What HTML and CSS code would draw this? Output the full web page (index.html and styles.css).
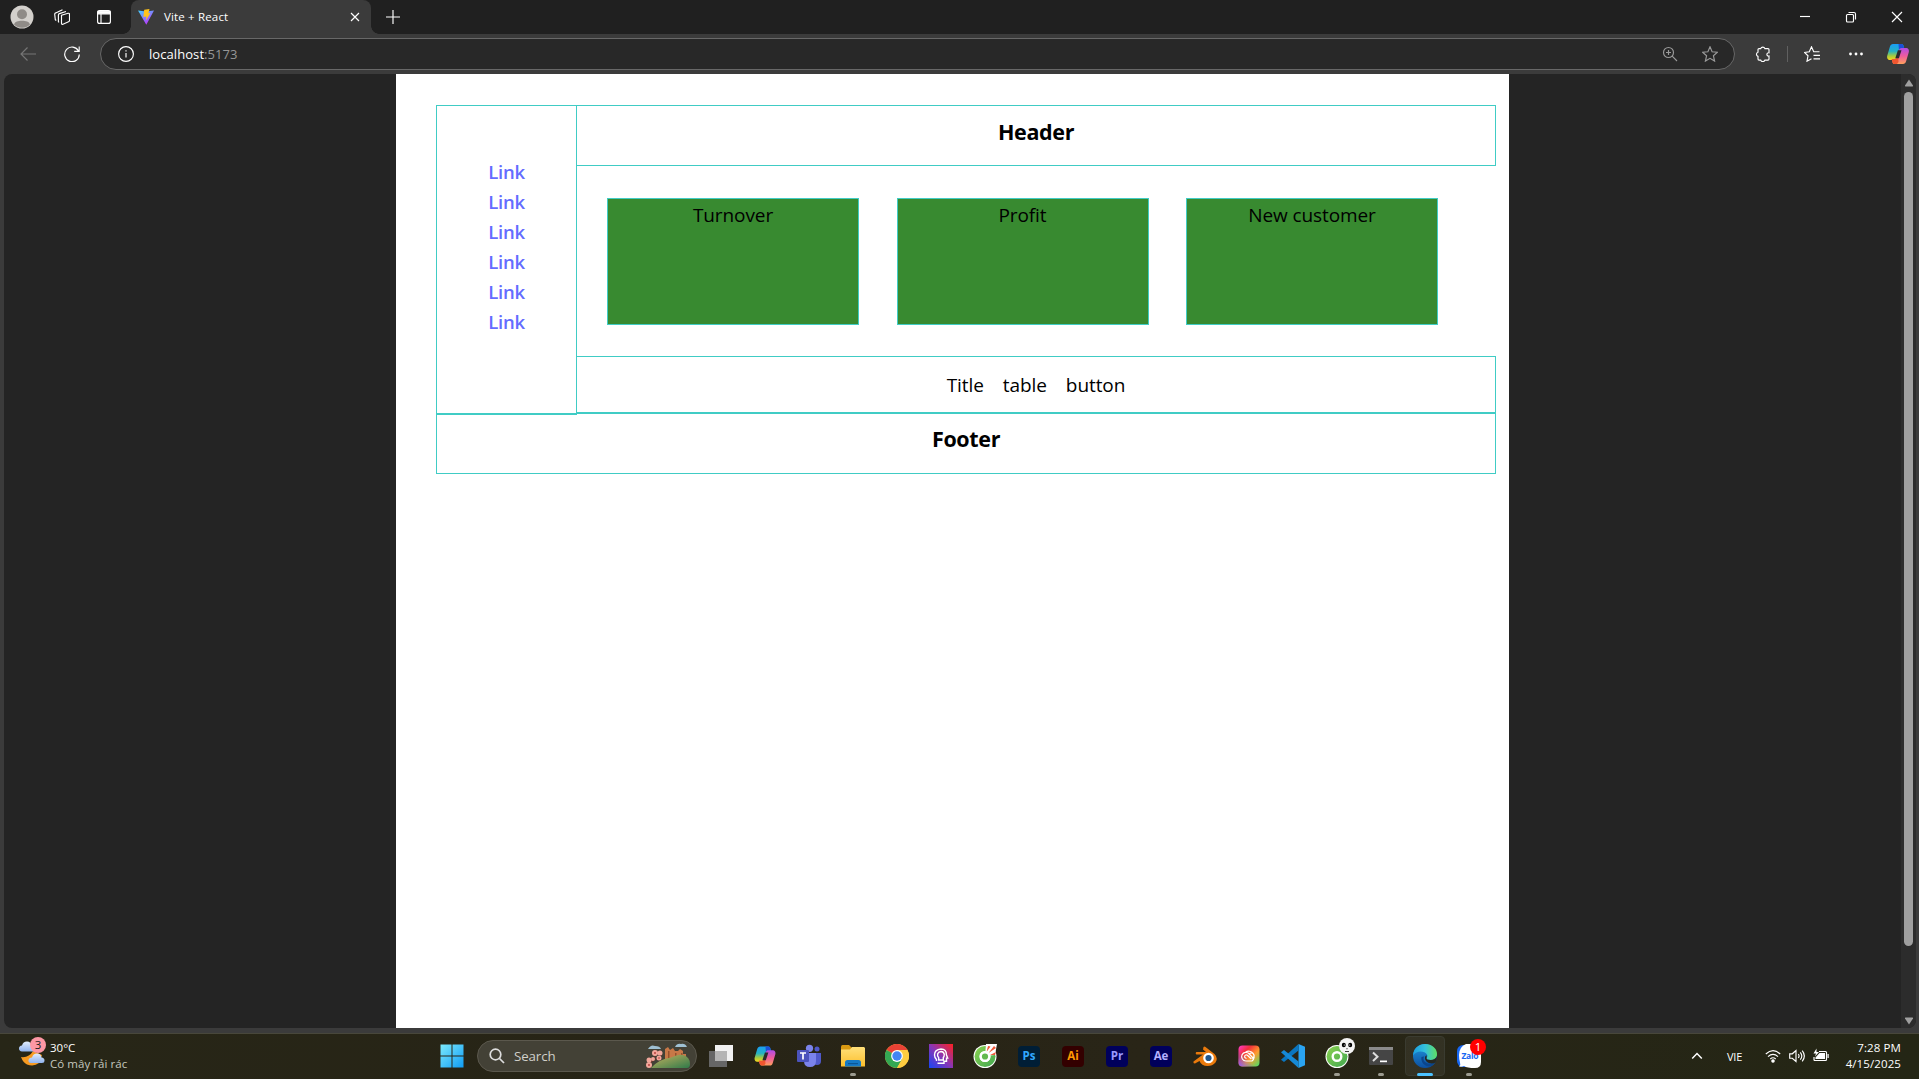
FILE: index.html
```html
<!DOCTYPE html>
<html lang="en">
<head>
<meta charset="utf-8">
<title>Vite + React</title>
<link rel="stylesheet" href="styles.css">
</head>
<body>
<svg width="0" height="0" class="defs" aria-hidden="true">
  <defs>
    <linearGradient id="cpA" x1="0" y1="0" x2="0" y2="1"><stop offset="0" stop-color="#1a9df5"/><stop offset=".45" stop-color="#25b2c4"/><stop offset=".75" stop-color="#a8cc3c"/><stop offset="1" stop-color="#f8d51d"/></linearGradient>
    <linearGradient id="cpB" x1="0" y1="0" x2="0" y2="1"><stop offset="0" stop-color="#b04ce8"/><stop offset=".5" stop-color="#ee5b9c"/><stop offset="1" stop-color="#ffa05c"/></linearGradient>
    <linearGradient id="winG" x1="0" y1="0" x2="1" y2="1"><stop offset="0" stop-color="#7ce9fc"/><stop offset="1" stop-color="#109cf5"/></linearGradient>
    <linearGradient id="viteA" x1="0" y1="0" x2=".6" y2="1"><stop offset="0" stop-color="#41d1ff"/><stop offset="1" stop-color="#bd34fe"/></linearGradient>
    <linearGradient id="folder" x1="0" y1="0" x2="0" y2="1"><stop offset="0" stop-color="#ffe07a"/><stop offset="1" stop-color="#fcbf2c"/></linearGradient>
    <linearGradient id="idG" x1="0" y1="1" x2="1" y2="0"><stop offset="0" stop-color="#1746f5"/><stop offset=".5" stop-color="#8a35b5"/><stop offset="1" stop-color="#ff2020"/></linearGradient>
    <linearGradient id="ccG" x1="0" y1="0" x2="1" y2="1"><stop offset="0" stop-color="#ff3bd0"/><stop offset=".3" stop-color="#f22f3c"/><stop offset=".6" stop-color="#ff9b2d"/><stop offset="1" stop-color="#3fe06b"/></linearGradient>
    <linearGradient id="ccB" x1="1" y1="0" x2="0" y2="1"><stop offset=".6" stop-color="#4b6bff" stop-opacity="0"/><stop offset="1" stop-color="#9a55ff"/></linearGradient>
    <linearGradient id="edgeA" x1="0" y1="0" x2="1" y2="0"><stop offset="0" stop-color="#1b9de0"/><stop offset=".5" stop-color="#34c1dd"/><stop offset="1" stop-color="#5fe062"/></linearGradient>
    <linearGradient id="edgeB" x1="0" y1="0" x2="0" y2="1"><stop offset="0" stop-color="#2196dd"/><stop offset="1" stop-color="#0c4fa0"/></linearGradient>
    <linearGradient id="greenG" x1="0" y1="0" x2="1" y2="1"><stop offset="0" stop-color="#8bd24f"/><stop offset="1" stop-color="#43a852"/></linearGradient>
    <linearGradient id="hill" x1="0" y1="0" x2="1" y2="1"><stop offset="0" stop-color="#c9b35f"/><stop offset="1" stop-color="#2f7a4a"/></linearGradient>
    <linearGradient id="cloud" x1="0" y1="0" x2="0" y2="1"><stop offset="0" stop-color="#e2edfc"/><stop offset="1" stop-color="#90b3ee"/></linearGradient>
    <symbol id="copilot" viewBox="0 0 24 24">
      <path d="M7 2h8.500c1.200 0 1.700.8 2 1.800l.9 3.200h-3.200c-1.300 0-1.900.8-2.200 1.900L11 16c-.5 1.300-1.200 2-2.600 2H3.800C1.300 18 .7 15.500 1.300 13.500l2.600-8.700C4.500 3 5.400 2 7 2z" fill="url(#cpA)"/>
      <path d="M12.500 2h3c1.200 0 1.700.8 2 1.800l.9 3.200h-3.200c-1.300 0-1.900.8-2.200 1.900z" fill="#1b50d8"/>
      <path d="M17 22H8.500c-1.200 0-1.700-.8-2-1.800L5.700 17h3c1.300 0 1.900-.8 2.200-1.900L13 8c.5-1.300 1.200-2 2.600-2h4.600c2.500 0 3.100 2.500 2.500 4.500l-2.600 8.700C19.500 21 18.600 22 17 22z" fill="url(#cpB)"/>
      <path d="M5.700 17h3c1.300 0 1.900-.8 2.200-1.900L12 11.500 12.500 20 11 22H8.500c-1.200 0-1.700-.8-2-1.800z" fill="#f0562f"/>
      <path d="M11.900 8.300h3.600l-2.600 8H9.300z" fill="#2b2a2c"/>
    </symbol>
    <symbol id="coccoc" viewBox="0 0 24 24">
      <circle cx="12" cy="12.500" r="11.500" fill="#fff"/>
      <circle cx="12" cy="12.500" r="10.500" fill="url(#greenG)"/>
      <circle cx="12" cy="12.500" r="4.300" fill="none" stroke="#fff" stroke-width="2.400"/>
    </symbol>
  </defs>
</svg>

<div class="titlebar">
  <svg class="avatar" viewBox="0 0 24 24"><circle cx="12" cy="12" r="11.500" fill="#d3d0cc"/><circle cx="12" cy="9.200" r="5" fill="#8f8b87"/><path d="M4 19.500C5 16.500 8 15.800 12 15.800s7 .7 8 3.700A11.500 11.500 0 0 1 4 19.500z" fill="#8f8b87"/></svg>
  <svg class="ico workspaces" viewBox="0 0 16 16"><path d="M7.500 6.300 14 4.300q1.500-.3 1.500 1v6.200q0 1-1 1.300L9 15.300q-1.500.3-1.500-1zM5 13.300l-.6-.6V6q0-1 1-1.400L12 2.500M2.300 11.500l-1-.8-.6-5.400q0-1 1-1.400L8.500.8"/></svg>
  <svg class="ico tabmenu" viewBox="0 0 16 16"><rect x="1.600" y="1.600" width="12.800" height="12.800" rx="2"/><path d="M5 5v9"/><path d="M2 2.200h12v2.600H2z" fill="#fff"/></svg>
  <div class="tab">
    <svg class="vite" viewBox="0 0 16 16"><path d="M0 1.500 8 2.600l8-1.100L8.300 15.700z" fill="url(#viteA)"/><path d="M6.200.8 11.500 0 10.400 4.300l2-.3L8 11.500l.4-4-3 .6z" fill="#ffc31a"/></svg>
    <span class="tab-title">Vite + React</span>
    <svg class="ico tab-close" viewBox="0 0 10 10"><path d="M1 1l8 8M9 1 1 9"/></svg>
  </div>
  <svg class="ico plus" viewBox="0 0 16 16"><path d="M8 1v14M1 8h14"/></svg>
  <div class="window-buttons">
    <svg class="ico" viewBox="0 0 16 16"><path d="M3 7.500h10"/></svg>
    <svg class="ico" viewBox="0 0 16 16"><rect x="3.500" y="5.500" width="7" height="7.500" rx="1"/><path d="M5.500 3.500H11q1.500 0 1.500 1.500v5.500"/></svg>
    <svg class="ico" viewBox="0 0 16 16"><path d="M3 3l10 10M13 3 3 13"/></svg>
  </div>
</div>

<div class="toolbar">
  <svg class="ico back" viewBox="0 0 16 16"><path d="M16 8H1M7.500 1.500 1 8l6.500 6.500"/></svg>
  <svg class="ico reload" viewBox="0 0 16 16"><path d="M14.500 5A7.300 7.300 0 1 0 15.300 8.500M15.200.5v4.800h-5"/></svg>
  <div class="address">
    <svg class="ico" viewBox="0 0 16 16"><circle cx="8" cy="8" r="7.400"/><path d="M8 7v4.500M8 4.300v1.300"/></svg>
    <span class="url">localhost<span class="port">:5173</span></span>
    <svg class="ico zoom" viewBox="0 0 16 16"><circle cx="6.500" cy="6.500" r="5"/><path d="M10.200 10.200 15 15M6.500 4v5M4 6.500h5"/></svg>
    <svg class="ico star" viewBox="0 0 16 16"><path d="m8 .8 2.100 4.900 5.300.5-4 3.500 1.200 5.400L8 12.300l-4.600 2.800 1.200-5.400-4-3.500 5.300-.5z"/></svg>
  </div>
  <svg class="ico puzzle" viewBox="0 0 16 16"><path d="M5.700 2.600a2.200 2.200 0 0 1 4.200 0H13q1 0 1 1v3.200a1.700 1.700 0 1 0 0 3.300v3q0 1-1 1H9.900a2.200 2.200 0 0 1-4.200 0H4q-1 0-1-1v-2.700a2.200 2.200 0 0 1 0-4.200V3.600q0-1 1-1z"/></svg>
  <span class="divider"></span>
  <svg class="ico favs" viewBox="0 0 16 16"><path d="M15.500 5.700H9.700L7.500.8 5.300 5.700.5 6.500l3.500 3.300-1 5.400 4.500-2.500M9.500 9.300h6.500M9.500 12.800h6.500"/></svg>
  <svg class="dots" viewBox="0 0 16 4"><circle cx="2.500" cy="2" r="1.400"/><circle cx="8" cy="2" r="1.400"/><circle cx="13.500" cy="2" r="1.400"/></svg>
  <svg class="copilot-btn"><use href="#copilot"/></svg>
</div>

<div class="viewport">
  <main class="page">
    <div class="upper">
      <nav class="sidebar">
        <a>Link</a><a>Link</a><a>Link</a><a>Link</a><a>Link</a><a>Link</a>
      </nav>
      <div class="content">
        <header class="box heading">Header</header>
        <section class="cards">
          <div class="card">Turnover</div>
          <div class="card">Profit</div>
          <div class="card">New customer</div>
        </section>
        <section class="box row"><span>Title</span><span>table</span><span>button</span></section>
      </div>
    </div>
    <footer class="box heading footer">Footer</footer>
  </main>
  <div class="scrollbar">
    <svg viewBox="0 0 10 8"><path d="M5 .5 9 6.500q.3 1-.6 1H1.600q-.9 0-.6-1z"/></svg>
    <span class="thumb"></span>
    <svg viewBox="0 0 10 8"><path d="M5 7.500 9 1.500q.3-1-.6-1H1.600q-.9 0-.6 1z"/></svg>
  </div>
</div>

<div class="taskbar">
  <div class="weather">
    <svg viewBox="0 0 28 30"><path d="M14 14l9 4-3 8q-5 4-12 1.500-4-2-6-7.500 8 1 12-6z" fill="#f79a20"/><path d="M3 14.500q-3-.3-3-3t3-3q1-4 5-4t5 5l2 5z" fill="url(#cloud)"/><path d="M12 26q-3-.5-2.500-3t3.500-2.500q1-4 5-4t4.500 4q3 .3 3 3t-3 2.500z" fill="url(#cloud)"/><circle cx="19" cy="8" r="8" fill="#fd97a5"/><text x="19" y="12.300" text-anchor="middle" class="badge-text">3</text></svg>
    <div class="weather-text"><span>30°C</span><span class="muted">Có mây rải rác</span></div>
  </div>
  <div class="apps">
    <div class="app"><svg viewBox="0 0 24 24"><path d="M.5 .5h11v11H.5zm12 0h11v11h-11zm-12 12h11v11H.5zm12 0h11v11h-11z" fill="url(#winG)"/></svg></div>
    <div class="search">
      <svg class="lens" viewBox="0 0 16 16"><circle cx="6.500" cy="6.500" r="5.300"/><path d="M10.500 10.500 15 15"/></svg>
      <span>Search</span>
      <svg class="scene" viewBox="0 0 46 26"><path d="M20 20V6l3-2 2 3 3-2 2 3h3l2-2 3 2v3h3v9z" fill="#c87847"/><path d="M23 8h1.500v9H23zm7 2h1.500v7H30zm6 0h1.500v6H36z" fill="#95512d"/><path d="M6 25Q14 16 26 14.500 33 11 38 12q7 2 7 9 0 4-3 4z" fill="url(#hill)"/><path d="M3 6q3-5 7-3 5 0 6 3zM30 4q2-4 6-3 4-1 6 3z" fill="#9fc0d3"/><path d="M3 24 13 8M5 20l12-8" stroke="#6a332b" fill="none"/><g fill="#f3a79b"><circle cx="10" cy="10" r="3"/><circle cx="15" cy="10" r="2.500"/><circle cx="4" cy="17" r="2.500"/><circle cx="8" cy="16" r="2"/><circle cx="4" cy="22" r="3"/><circle cx="14" cy="15" r="2.500"/></g><g fill="#b03a35"><circle cx="10" cy="10" r=".9"/><circle cx="4" cy="22" r=".9"/><circle cx="14" cy="15" r=".8"/></g></svg>
    </div>
    <div class="app"><svg viewBox="0 0 24 24"><path d="M6 1h18v16H6z" fill="#f1f1f1"/><path d="M0 7h18v16H0z" fill="#666"/><path d="M6 7h12v10H6z" fill="#b4b4b4"/></svg></div>
    <div class="app"><svg viewBox="-.5 0 25 24"><use href="#copilot" width="24" height="24"/></svg></div>
    <div class="app"><svg viewBox="0 0 24 24"><circle cx="12.500" cy="4.300" r="3.600" fill="#7b83eb"/><circle cx="20" cy="5" r="2.500" fill="#5059c9"/><path d="M16 9h8v8q0 4-4 4-4 0-4-4z" fill="#5059c9"/><path d="M7 9h12v8q0 6-6 6t-6-6z" fill="#7b83eb"/><rect y="6" width="12" height="12" rx="1" fill="#4b53bc"/><path d="M3 9h6M6 9v6.500" stroke="#fff" stroke-width="1.700"/></svg></div>
    <div class="app running"><svg viewBox="0 0 24 24"><path d="M0 3q0-2 1.500-2H8l2.500 2.500V8H0z" fill="#d99a12"/><path d="M0 5.500h9l2-2.500h12l1 1v18.500H0z" fill="url(#folder)"/><path d="M4 22.500v-4q0-2.500 2.500-2.500h11q2.500 0 2.500 2.500v4z" fill="#1579c5"/><path d="M7 19h10v1.200H7z" fill="#0b5796"/></svg></div>
    <div class="app"><svg viewBox="0 0 24 24"><circle cx="12" cy="12" r="12" fill="#ffcd40"/><path d="M12 12 1.600 6A12 12 0 0 1 22.400 6z" fill="#e94235"/><path d="M1.600 6A12 12 0 0 0 12 24l5.200-9z" fill="#34a853"/><path d="M22.400 6H12v6l5.200 3L12 24A12 12 0 0 0 22.400 6z" fill="#ffcd40"/><circle cx="12" cy="12" r="5.900" fill="#fff"/><circle cx="12" cy="12" r="4.700" fill="#4285f4"/></svg></div>
    <div class="app"><svg viewBox="0 0 24 24"><path d="M0 0h24v24H0z" fill="url(#idG)"/><path d="M8.500 19.300H15v-2h2.500v-3.200h1.200l-1.300-3.300Q17.500 5 12 5 5.500 5.500 5.500 11q0 2.500 2 4.500v1.500M9.700 16v-2.300Q8 12 8.700 9.700 9.700 7.500 12 7.500q3 .2 3.300 3 0 2-1 3V16z" fill="none" stroke="#fff" stroke-width="1.400"/></svg></div>
    <div class="app"><svg viewBox="0 0 24 24"><use href="#coccoc" width="24" height="24"/><path d="M12 12 13 0h11l-2 11z" fill="#fff"/><path d="M13.500 8 15 2l2.500.5zM15.500 9 21 2l2 2zM17 11l6-3-1 3z" fill="#f0583a"/><circle cx="12" cy="12.500" r="4.300" fill="#64b94e" stroke="#fff" stroke-width="2.400"/></svg></div>
    <div class="app"><span class="adobe ps">Ps</span></div>
    <div class="app"><span class="adobe ai">Ai</span></div>
    <div class="app"><span class="adobe pr">Pr</span></div>
    <div class="app"><span class="adobe ae">Ae</span></div>
    <div class="app"><svg viewBox="0 0 24 24"><path d="M10.500 3q1-.8 2 0l9 7q4 4 1 8.500-3 3.500-8 3.500-6 0-8-5l-4.500 2.500q-2 0-1.500-2L10 10.500H3.500q-1.500-1-.2-2.500H13l-3-2.500z" fill="#ea7a0c"/><circle cx="15.500" cy="14" r="5.300" fill="#fff"/><circle cx="15.500" cy="14" r="3.100" fill="#20568c"/></svg></div>
    <div class="app"><svg viewBox="0 0 24 24"><rect x="1.500" y="1.500" width="21" height="21" rx="4" fill="url(#ccG)"/><rect x="1.500" y="1.500" width="21" height="21" rx="4" fill="url(#ccB)"/><path d="M15 17H9a4.300 4.300 0 1 1 3.300-7l3.200 3.500M9.500 14.300a1.700 1.700 0 1 1 .9-3l4 3.700M8.500 8.300A5 5 0 1 1 15 17M12.300 10a2.700 2.700 0 1 1 2.700 4.300" fill="none" stroke="#fff" stroke-width="1.200"/></svg></div>
    <div class="app"><svg viewBox="0 0 24 24"><path d="M17.500 0 24 2.800v18.400L17.500 24z" fill="#2aa4f2"/><path d="M17.500 0v6.500L3 18l-3-2.300z" fill="#0a76c0"/><path d="M17.500 24v-6.500L3 6 0 8.300z" fill="#1689d6"/></svg></div>
    <div class="app running"><svg viewBox="0 0 24 24"><use href="#coccoc" width="24" height="24"/></svg><svg class="panda" viewBox="0 0 16 16"><circle cx="8" cy="8" r="8" fill="#f4f4f4"/><ellipse cx="4.800" cy="7" rx="2" ry="2.300"/><ellipse cx="11.200" cy="7" rx="2" ry="2.300"/><path d="M7 10.500h2l-1 1zM6 13h4v.7H6z"/><circle cx="5.300" cy="7" r=".6" fill="#fff"/><circle cx="10.700" cy="7" r=".6" fill="#fff"/></svg></div>
    <div class="app running"><svg viewBox="0 0 24 24"><rect y="3" width="24" height="18" rx="1" fill="#454545"/><path d="M0 3h24v3H0z" fill="#8b8b8b"/><path d="m4 8.500 4.500 4.300L4 17" fill="none" stroke="#ddd" stroke-width="2"/><path d="M11 16.500h7v1.700h-7z" fill="#fff"/></svg></div>
    <div class="app active"><svg viewBox="0 0 24 24"><circle cx="12" cy="12" r="12" fill="url(#edgeB)"/><path d="M0 11.500C.5 4 6 0 12 0c7 0 12 4.500 12 10 0 4-3 6-6.500 6-3 0-4.500-1-4-2 .8-1 1.200-2 .5-3.500C12 7 4 5.500 0 11.500z" fill="url(#edgeA)"/><path d="M8.500 13c-1 5 3 9.500 8 9.500q3 0 6-4.500-3 2-7 1.500c-4-.5-6-4-4.500-7z" fill="#0b458c"/><path d="M13.600 14c-.5 1 1 2 4 2 3 0 5.500-1.200 6.400-4l-.3 3.500-1.200 3c-5 2.500-11-.5-10.500-5 .2-1.500 1-2 1.700-2z" fill="#272820"/></svg></div>
    <div class="app running"><svg viewBox="0 0 24 24"><rect x="0" y="1" width="22" height="22" rx="6" fill="#1767f2"/><path d="M9 0h9q6 0 6 6v12q0 6-6 6-8 0-11-2-2 1-5 .5 2-1.500 1-4Q2 15 2 11 2 3 9 0z" fill="#fff"/><text x="4.500" y="14.500" class="zalo-text" textLength="17">Zalo</text></svg><span class="count">1</span></div>
  </div>
  <div class="tray">
    <svg class="ico chevron" viewBox="0 0 12 8"><path d="m1.200 6.500 4.800-5 4.800 5"/></svg>
    <span class="lang">VIE</span>
    <svg class="ico" viewBox="0 0 16 16"><path d="M.8 6q7.200-6.700 14.400 0M3 8.700q5-4.600 10 0M5.300 11q2.700-2.500 5.400 0"/><circle cx="8" cy="13" r="1.200" fill="#fff"/></svg>
    <svg class="ico" viewBox="0 0 16 16"><path d="M.7 5.800h2.600L7 2.500v11l-3.700-3.300H.7zM9.300 6q1.500 2 0 4M11.300 4.300q3 3.700 0 7.400M13.200 2.700q4.300 5.300 0 10.600"/></svg>
    <svg class="ico" viewBox="0 0 16 16"><path d="M6 3.500h6.500q1 0 1 1v7q0 1-1 1H2q-1 0-1-1V9"/><path d="M6.500 5H12v6H2.500V9.500zM3.500.5.5 5.500H3l-1 3 4-4.500H3.500zM14.500 6h1.200v4h-1.200z" fill="#fff" stroke="none"/></svg>
    <div class="clock"><span>7:28 PM</span><span>4/15/2025</span></div>
  </div>
</div>
</body>
</html>
```
FILE: styles.css
```css
* { box-sizing: border-box; }
html, body { height: 100%; }
body {
  margin: 0;
  overflow: hidden;
  display: flex;
  flex-direction: column;
  background: #3b3b3b;
  color: #fff;
  font: 11.5px/16px "Open Sans", "Noto Sans", sans-serif;
}
svg { display: block; flex: none; }
.defs { position: absolute; }
.ico { width: 16px; height: 16px; fill: none; stroke: #fff; stroke-width: 1.15; }

.titlebar {
  flex: none;
  height: 34px;
  display: flex;
  align-items: center;
  background: #202020;
  padding-left: 10px;
}
.avatar { width: 24px; height: 24px; }
.workspaces { margin-left: 20px; }
.tabmenu { margin-left: 26px; }
.tab {
  position: relative;
  width: 240px;
  height: 34px;
  margin-left: 19px;
  padding: 0 11px 0 7px;
  display: flex;
  align-items: center;
  background: #3b3b3b;
  border-radius: 8px 8px 0 0;
}
.tab::before, .tab::after {
  content: "";
  position: absolute;
  bottom: 0;
  width: 8px;
  height: 8px;
}
.tab::before { left: -8px; background: radial-gradient(circle at 0 0, transparent 7.5px, #3b3b3b 8px); }
.tab::after { right: -8px; background: radial-gradient(circle at 100% 0, transparent 7.5px, #3b3b3b 8px); }
.vite { width: 16px; height: 16px; }
.tab-title { margin-left: 10px; letter-spacing: .16px; }
.tab-close { width: 10px; height: 10px; margin-left: auto; }
.plus { margin-left: 14px; }
.window-buttons { display: flex; gap: 30px; margin: 0 14px 0 auto; }

.toolbar {
  flex: none;
  height: 40px;
  display: flex;
  align-items: center;
  padding-left: 20px;
}
.back { stroke: #767676; }
.reload { margin-left: 28px; }
.address {
  width: 1635px;
  height: 32px;
  margin-left: 20px;
  padding: 0 16px 0 17px;
  display: flex;
  align-items: center;
  background: #282828;
  border: 1px solid #686868;
  border-radius: 16px;
}
.url { margin: 0 auto 0 15px; font-size: 13px; letter-spacing: .07px; }
.port { color: #969696; }
.zoom, .star { stroke: #9a9a9a; }
.star { margin-left: 24px; }
.puzzle { margin-left: 20px; }
.divider { width: 1px; height: 16px; margin-left: 16px; background: #606060; }
.favs { margin-left: 16px; }
.dots { width: 16px; height: 4px; margin-left: 28px; fill: #fff; }
.copilot-btn { width: 24px; height: 24px; margin-left: 22px; }

.viewport {
  flex: none;
  height: 954px;
  margin: 0 3px 0 4px;
  display: flex;
  background: #242424;
  border-radius: 8px;
  overflow: hidden;
}
.page {
  width: 1113px;
  margin-left: 392px;
  padding: 31px 13px 0 40px;
  background: #fff;
  color: #000;
  font-size: 19px;
  line-height: 30px;
  text-align: center;
}
.upper { display: flex; height: 308px; }
.sidebar {
  width: 141px;
  height: 310px;
  flex: none;
  display: flex;
  flex-direction: column;
  padding-top: 51px;
  border: 1px solid #40ccc5;
  color: #646cff;
  font-size: 18.5px;
  font-weight: 600;
  letter-spacing: -.3px;
}
.content { flex: 1; display: flex; flex-direction: column; margin-left: -1px; }
.box { border: 1px solid #40ccc5; }
.heading { height: 61px; padding-top: 11px; font-size: 21.5px; font-weight: 700; letter-spacing: -.35px; }
.footer { padding-top: 10px; }
.cards { flex: 1; display: flex; gap: 37.5px; padding: 32px 0 0 31px; }
.card {
  width: 252px;
  height: 127px;
  padding-top: 1px;
  border: 1px solid #40ccc5;
  background: #388a30;
  letter-spacing: -.1px;
}
.row { height: 57px; display: flex; justify-content: center; gap: 19px; padding-top: 13px; letter-spacing: -.08px; }

.scrollbar {
  width: 15px;
  margin-left: auto;
  display: flex;
  flex-direction: column;
  align-items: center;
  background: #2c2c2c;
  padding: 5px 0 3px;
}
.scrollbar svg { width: 10px; height: 8px; fill: #9f9f9f; }
.thumb { width: 9px; height: 854px; margin: 5px 0 auto; border-radius: 5px; background: #9f9f9f; }

.taskbar {
  height: 46px;
  margin-top: 5px;
  display: flex;
  box-shadow: inset 0 1px #48473b;
  background: linear-gradient(90deg, #272617, #272416 35%, #292517 60%, #242615);
}
.weather { width: 430px; display: flex; padding-left: 19px; }
.weather > svg { width: 28px; height: 30px; margin-top: 4px; }
.weather-text { display: flex; flex-direction: column; margin: 7px 0 0 3px; }
.muted { color: #c5c6be; letter-spacing: .05px; }
.badge-text { font-size: 11.5px; fill: #222; }
.apps { display: flex; align-items: center; }
.app {
  position: relative;
  width: 44px;
  height: 44px;
  display: flex;
  align-items: center;
  justify-content: center;
}
.app > svg { width: 24px; height: 24px; }
.running::after, .active::after {
  content: "";
  position: absolute;
  bottom: 2px;
  left: 19px;
  width: 6px;
  height: 3px;
  border-radius: 2px;
  background: #9c9b90;
}
.active::before {
  content: "";
  position: absolute;
  inset: 2px;
  border: 1px solid #3a3b30;
  border-radius: 4px;
  background: rgba(255, 255, 255, .06);
}
.active::after { left: 14px; width: 16px; background: #4cc2ff; }
.active > svg { position: relative; }
.search {
  width: 220px;
  height: 32px;
  margin: 0 2px 0 3px;
  padding: 0 5px 0 11px;
  display: flex;
  align-items: center;
  border: 1px solid #5b584d;
  border-radius: 16px;
  background: #434136;
  color: #d0cfc9;
  font-size: 13.3px;
}
.search span { margin: 0 auto 0 9px; letter-spacing: -.1px; }
.lens { width: 16px; height: 16px; fill: none; stroke: #ddd; stroke-width: 1.7; }
.scene { width: 46px; height: 26px; }
.adobe {
  width: 22px;
  height: 21px;
  border-radius: 4px;
  text-align: center;
  font-size: 11.5px;
  line-height: 20px;
  font-weight: 700;
}
.ps { background: #001e36; color: #31a8ff; }
.ai { background: #330000; color: #ff9a00; }
.pr, .ae { background: #00005b; color: #9999ff; }
.ae { color: #b4b0ff; }
.app > .panda { position: absolute; left: 24px; top: 4px; width: 16px; height: 16px; }
.zalo-text { font-size: 8.5px; font-weight: 700; fill: #1767f2; }
.count {
  position: absolute;
  left: 23px;
  top: 5px;
  width: 16px;
  height: 16px;
  border-radius: 8px;
  background: #f00;
  text-align: center;
}
.tray { display: flex; align-items: center; margin: 0 18px 0 auto; }
.tray .ico + .ico { margin-left: 8px; }
.chevron { width: 12px; height: 8px; stroke-width: 1.5; }
.lang { margin: 1px 22px 0 24px; font-size: 11px; width: 16px; letter-spacing: -.2px; }
.clock { width: 72px; display: flex; flex-direction: column; text-align: right; letter-spacing: .1px; }
```
